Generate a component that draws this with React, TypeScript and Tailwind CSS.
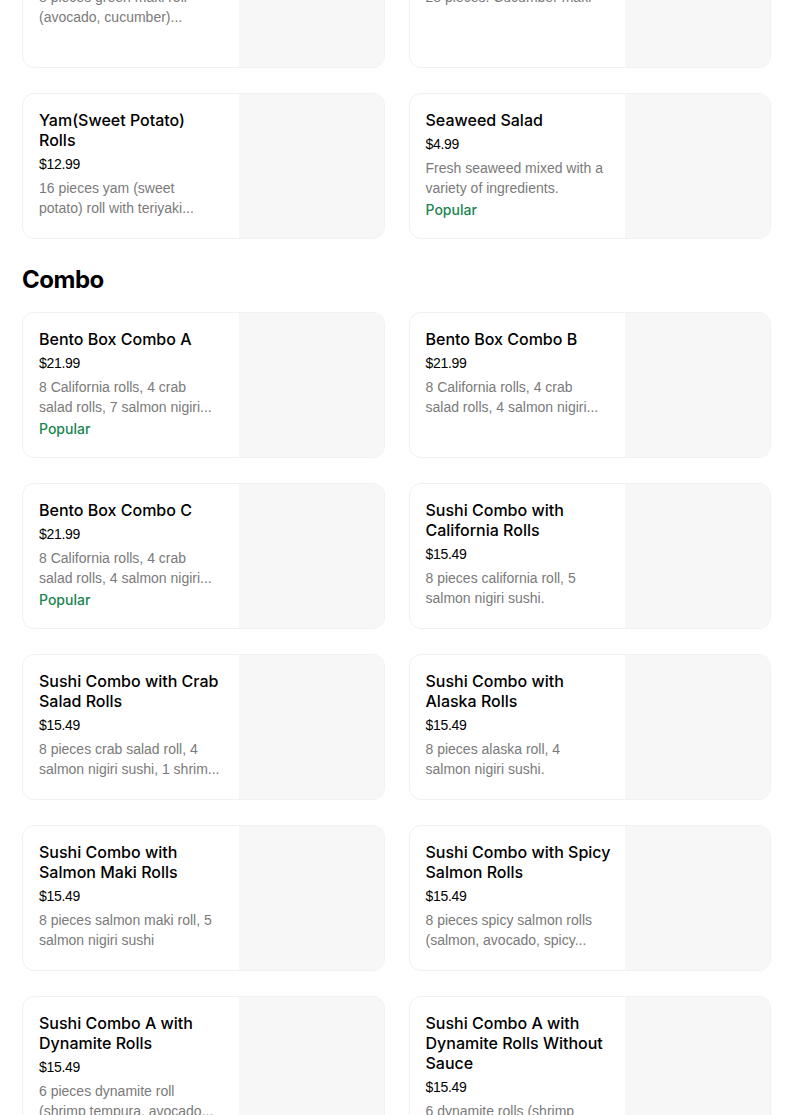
import React from "react";

type Item = {
  title: string[];
  price: string;
  desc: string[];
  popular?: boolean;
};

const top: Item[] = [
  { title: ["Green Maki Roll"], price: "$6.99", desc: ["8 pieces green maki roll", "(avocado, cucumber)..."] },
  { title: ["Cucumber Maki"], price: "$7.99", desc: ["28 pieces. Cucumber maki"] },
  { title: ["Yam(Sweet Potato)", "Rolls"], price: "$12.99", desc: ["16 pieces yam (sweet", "potato) roll with teriyaki..."] },
  { title: ["Seaweed Salad"], price: "$4.99", desc: ["Fresh seaweed mixed with a", "variety of ingredients."], popular: true },
];

const combo: Item[] = [
  { title: ["Bento Box Combo A"], price: "$21.99", desc: ["8 California rolls, 4 crab", "salad rolls, 7 salmon nigiri..."], popular: true },
  { title: ["Bento Box Combo B"], price: "$21.99", desc: ["8 California rolls, 4 crab", "salad rolls, 4 salmon nigiri..."] },
  { title: ["Bento Box Combo C"], price: "$21.99", desc: ["8 California rolls, 4 crab", "salad rolls, 4 salmon nigiri..."], popular: true },
  { title: ["Sushi Combo with", "California Rolls"], price: "$15.49", desc: ["8 pieces california roll, 5", "salmon nigiri sushi."] },
  { title: ["Sushi Combo with Crab", "Salad Rolls"], price: "$15.49", desc: ["8 pieces crab salad roll, 4", "salmon nigiri sushi, 1 shrim..."] },
  { title: ["Sushi Combo with", "Alaska Rolls"], price: "$15.49", desc: ["8 pieces alaska roll, 4", "salmon nigiri sushi."] },
  { title: ["Sushi Combo with", "Salmon Maki Rolls"], price: "$15.49", desc: ["8 pieces salmon maki roll, 5", "salmon nigiri sushi"] },
  { title: ["Sushi Combo with Spicy", "Salmon Rolls"], price: "$15.49", desc: ["8 pieces spicy salmon rolls", "(salmon, avocado, spicy..."] },
  { title: ["Sushi Combo A with", "Dynamite Rolls"], price: "$15.49", desc: ["6 pieces dynamite roll", "(shrimp tempura, avocado..."] },
  { title: ["Sushi Combo A with", "Dynamite Rolls Without", "Sauce"], price: "$15.49", desc: ["6 dynamite rolls (shrimp", "tempura, avocado..."] },
];

function Card({ item }: { item: Item }) {
  return (
    <div className="flex h-[146px] overflow-hidden rounded-xl border border-[#f1f1f1] bg-white">
      <div className="min-w-0 flex-1 overflow-hidden px-4 pt-4">
        <div className="font-['Inter',sans-serif] text-[16px] font-medium leading-5 text-[#000000]">
          {item.title.map((l, i) => (
            <div key={i} className="whitespace-nowrap">{l}</div>
          ))}
        </div>
        <div className="mt-1 font-['Liberation_Sans',sans-serif] text-[14px] leading-5 tracking-[-0.3px] text-[#000000]">
          {item.price}
        </div>
        <div className="mt-1 font-['Liberation_Sans',sans-serif] text-[14px] leading-5 text-[#7a7a7a]">
          {item.desc.map((l, i) => (
            <div key={i} className="whitespace-nowrap">{l}</div>
          ))}
        </div>
        {item.popular && (
          <div className="mt-0.5 font-['Inter',sans-serif] text-[14px] font-medium leading-5 text-[#1a8550]">
            Popular
          </div>
        )}
      </div>
      <div className="h-full w-[145px] shrink-0 bg-[#f7f7f7]" />
    </div>
  );
}

export default function App() {
  return (
    <div className="min-h-screen overflow-hidden bg-white">
      <div className="-mt-[78px] pl-[22px] pr-[33px]">
        <div className="grid grid-cols-2 gap-x-6 gap-y-[25px]">
          {top.map((it, i) => (
            <Card key={i} item={it} />
          ))}
        </div>
        <h2 className="mb-4 mt-[25px] font-['Inter',sans-serif] text-[24px] font-bold leading-8 tracking-[-0.5px] text-black">
          Combo
        </h2>
        <div className="grid grid-cols-2 gap-x-6 gap-y-[25px]">
          {combo.map((it, i) => (
            <Card key={i} item={it} />
          ))}
        </div>
      </div>
    </div>
  );
}
